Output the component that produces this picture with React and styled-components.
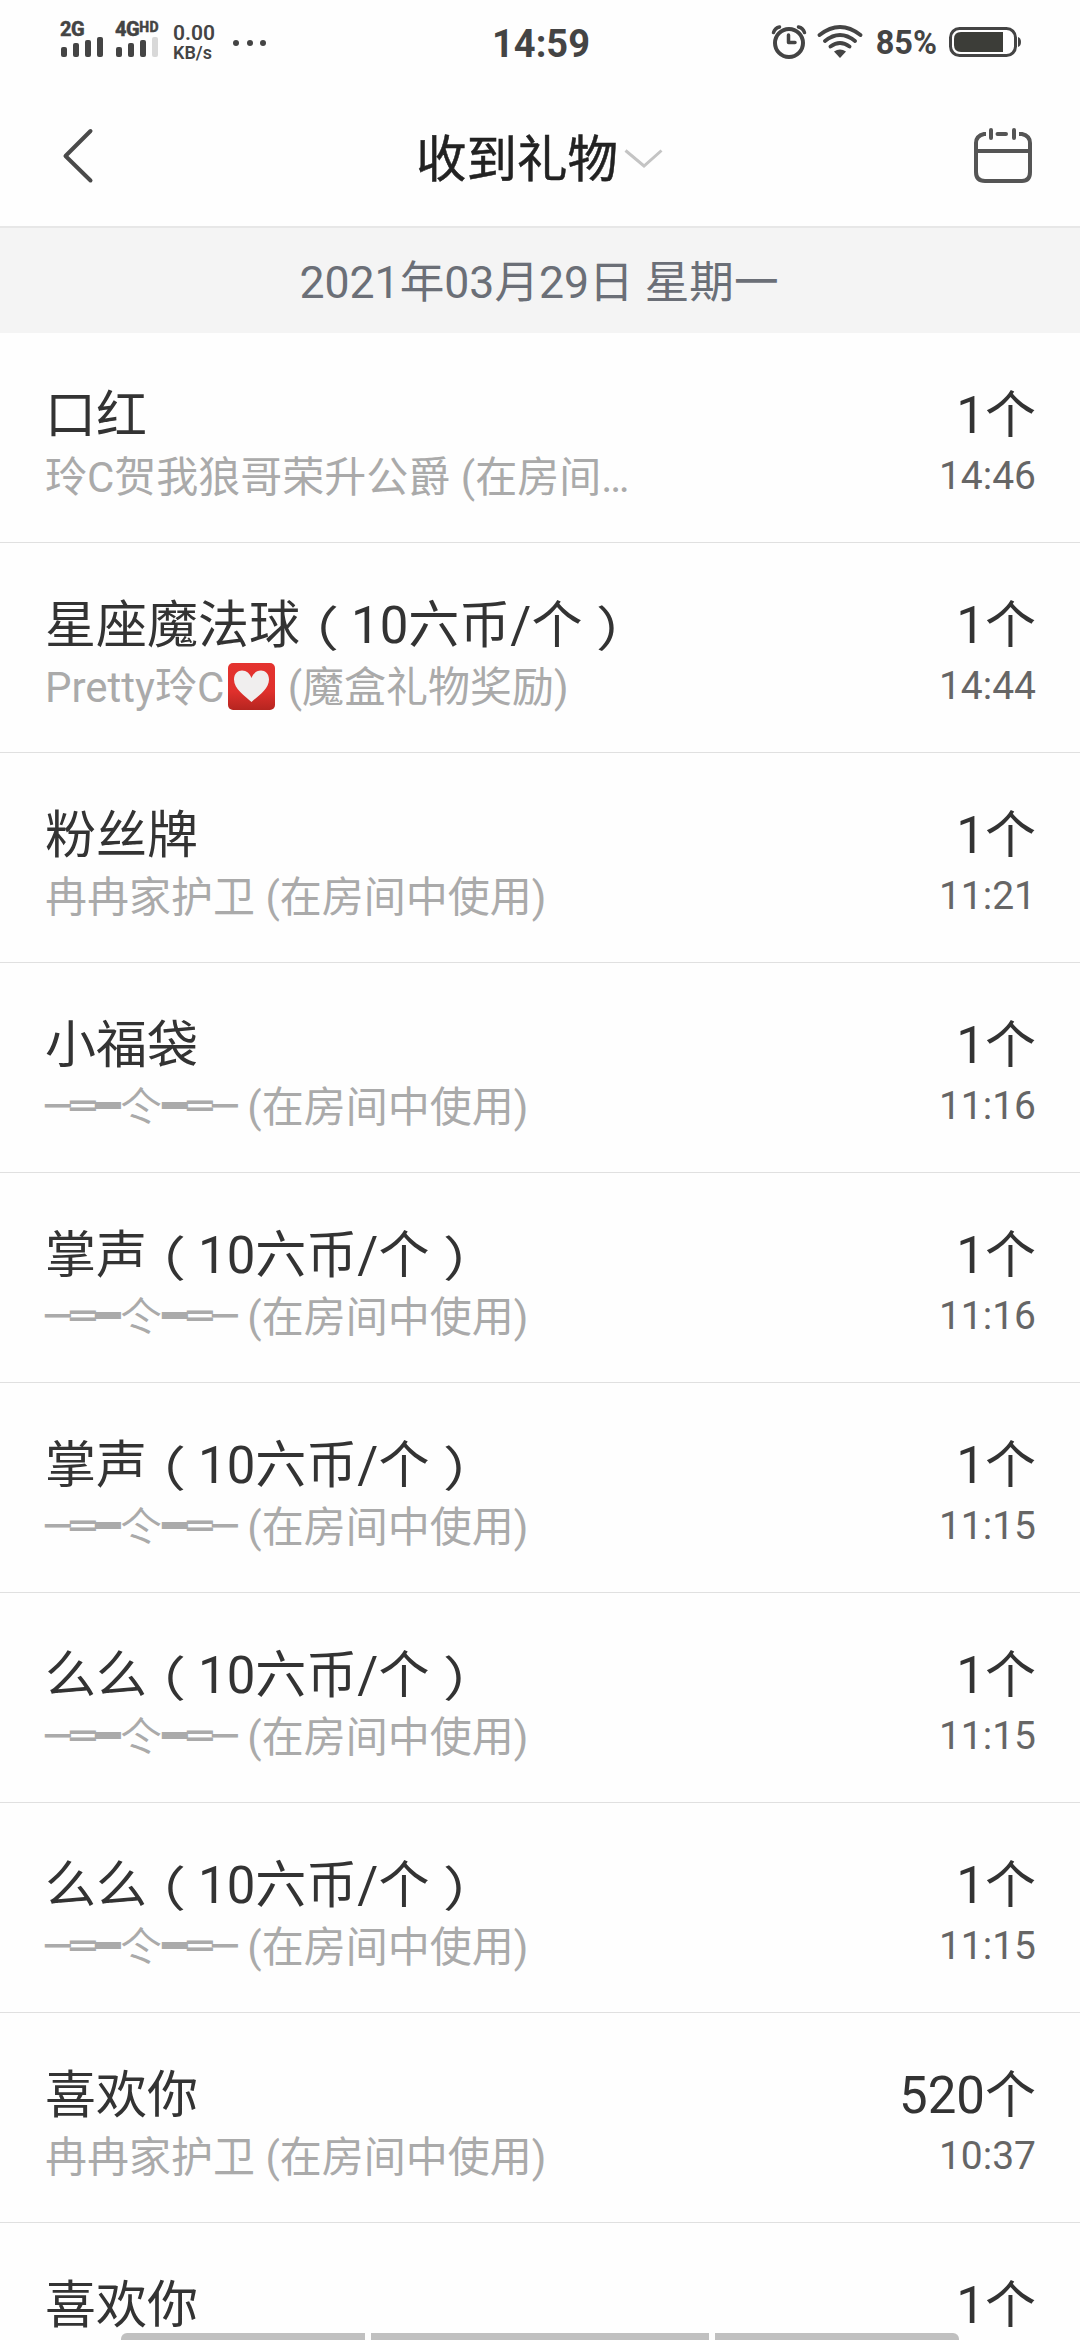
import styled, { createGlobalStyle } from "styled-components";

const GlobalStyle = createGlobalStyle`
    *{
    box-sizing:border-box;
    }
    body{
    margin:0;
    background:#fefefe;
    font-family:Roboto, "Noto Sans CJK SC", sans-serif;
    color:#333;
    }
`;

const Screen = styled.div`
    position:relative;
    width:1080px;
    height:2340px;
    overflow:hidden;
    display:flex;
    flex-direction:column;
`;

const StatusBar = styled.div`
    flex:none;
    height:84px;
    padding:0 58px 0 60px;
    display:grid;
    grid-template-columns:1fr auto 1fr;
    color:#444;
`;

const StatusGroup = styled.div`
    display:flex;
    align-items:flex-start;
    justify-content:${props => props.$end ? "flex-end" : "flex-start"};
`;

const Signal = styled.div`
    width:${props => props.$width}px;
    padding-top:21px;
`;

const Network = styled.div`
    height:16px;
    display:flex;
    align-items:flex-start;
    font-size:20px;
    line-height:17px;
    font-weight:800;
    letter-spacing:-0.5px;
    -webkit-text-stroke:0.4px #444;
    sup{
    font-size:14px;
    line-height:13px;
    letter-spacing:0.5px;
    }
`;

const Bars = styled.div`
    display:flex;
    align-items:flex-end;
    gap:6px;
    height:20px;
    padding-left:1px;
`;

const Bar = styled.span`
    width:6px;
    height:${props => props.$height}px;
    border-radius:2px;
    background:${props => props.$off ? "#d8d8d8" : "#444"};
`;

const Speed = styled.div`
    width:60px;
    padding-top:23px;
    font-size:18px;
    line-height:19px;
    font-weight:600;
    span{
    display:block;
    font-size:21px;
    line-height:20px;
    }
    white-space:nowrap;
`;

const Dots = styled.div`
    display:flex;
    gap:7.5px;
    padding-top:40px;
    i{
    width:6px;
    height:6px;
    border-radius:50%;
    background:#444;
    }
`;

const Clock = styled.div`
    padding-top:22px;
    font-size:38px;
    line-height:44px;
    font-weight:700;
`;

const Percent = styled.div`
    padding-top:21px;
    margin:0 12px 0 13px;
    font-size:32.5px;
    line-height:44px;
    font-weight:700;
`;

const StatusIcon = styled.svg`
    flex:none;
    display:block;
    margin:${props => props.$margin};
`;

const Header = styled.header`
    flex:none;
    height:144px;
    padding:0 45px;
    display:grid;
    grid-template-columns:1fr auto 1fr;
    align-items:start;
    border-bottom:2px solid #e7e7e7;
`;

const IconButton = styled.button`
    border:none;
    background:none;
    padding:${props => props.$padding};
    justify-self:${props => props.$right ? "end" : "start"};
    svg{
    display:block;
    }
`;

const HeaderTitle = styled.h1`
    margin:0;
    padding-top:39px;
    display:flex;
    font-size:50.5px;
    line-height:74px;
    font-weight:400;
    -webkit-text-stroke:0.5px #222;
    color:#222;
    svg{
    margin:25px 0 0 6px;
    }
`;

const DateBar = styled.div`
    flex:none;
    height:105px;
    padding-right:2px;
    background:#f4f4f4;
    color:#6b6f77;
    text-align:center;
    font-size:44.6px;
    line-height:110px;
`;

const GiftRow = styled.div`
    flex:none;
    height:210px;
    padding:52px 44px 0 45px;
    display:flex;
    justify-content:space-between;
    border-bottom:1px solid #e0e0e0;
`;

const GiftInfo = styled.div`
    text-align:${props => props.$right ? "right" : "left"};
    white-space:nowrap;
`;

const GiftName = styled.div`
    font-size:51px;
    line-height:61px;
`;

const Sender = styled.div`
    padding-top:1px;
    font-size:42px;
    line-height:62px;
    color:#aaa;
    display:flex;
`;

const Time = styled.div`
    padding-top:1px;
    font-size:39px;
    line-height:59px;
    color:#666;
`;

const Paren = styled.span`
    display:inline-block;
    width:51px;
    text-align:center;
    font-family:"Noto Sans CJK SC", sans-serif;
    font-feature-settings:"halt";
    line-height:1;
    transform:translate(${props => props.$shift}px, 4px) scale(1.15, 0.94);
`;

const Lines = styled.span`
    margin-top:-2px;
    font-family:"DejaVu Sans Mono", monospace;
    letter-spacing:-0.3px;
`;

const HeartSvg = styled.svg`
    margin:6px 2px 0 4px;
`;

const NavBar = styled.div`
    position:absolute;
    left:121px;
    bottom:0;
    width:838px;
    height:7px;
    display:grid;
    grid-template-columns:244px 338px 244px;
    gap:6px;
    border-radius:6px 6px 0 0;
    overflow:hidden;
    background:#fefefe;
    span{
    background:#c0c0c0;
    }
`;

function Heart(){
    return(
        <HeartSvg width="47" height="47" viewBox="0 0 47 47">
            <defs>
                <linearGradient id="tile" x1="0" y1="0" x2="0" y2="1">
                    <stop offset="0" stopColor="#e4332f" />
                    <stop offset="0.6" stopColor="#e0302c" />
                    <stop offset="1" stopColor="#b52520" />
                </linearGradient>
            </defs>
            <rect width="47" height="47" rx="5" fill="url(#tile)" />
            <path d="M23.500 39C17 33 6 26 6 16.500C6 10.500 10 7.500 14 7.500C18.500 7.500 22 10.500 23.500 15C25 10.500 28.500 7.500 33 7.500C37 7.500 41 10.500 41 16.500C41 26 30 33 23.500 39Z" fill="#f0eeee" />
        </HeartSvg>
    )
}

function Knight(){
    return(
        <>
        <Lines>─═━</Lines>仒<Lines>━═─</Lines>
        </>
    )
}

const inRoom = "\u00a0(在房间中使用)";

const gifts = [
    {name:"口红", sender:"玲C贺我狼哥荣升公爵 (在房间…", count:1, time:"14:46"},
    {name:"星座魔法球", price:true, sender:<>Pretty玲C<Heart />{"\u00a0(魔盒礼物奖励)"}</>, count:1, time:"14:44"},
    {name:"粉丝牌", sender:"冉冉家护卫 (在房间中使用)", count:1, time:"11:21"},
    {name:"小福袋", sender:<><Knight />{inRoom}</>, count:1, time:"11:16"},
    {name:"掌声", price:true, sender:<><Knight />{inRoom}</>, count:1, time:"11:16"},
    {name:"掌声", price:true, sender:<><Knight />{inRoom}</>, count:1, time:"11:15"},
    {name:"么么", price:true, sender:<><Knight />{inRoom}</>, count:1, time:"11:15"},
    {name:"么么", price:true, sender:<><Knight />{inRoom}</>, count:1, time:"11:15"},
    {name:"喜欢你", sender:"冉冉家护卫 (在房间中使用)", count:520, time:"10:37"},
    {name:"喜欢你", count:1},
];

function Gift({name,price,sender,count,time}){
    return(
        <GiftRow>
            <GiftInfo>
                <GiftName>
                    {name}
                    {price && <><Paren $shift={-1}>（</Paren>10六币/个<Paren $shift={3}>）</Paren></>}
                </GiftName>
                {sender && <Sender>{sender}</Sender>}
            </GiftInfo>
            <GiftInfo $right>
                <GiftName>{count}个</GiftName>
                {time && <Time>{time}</Time>}
            </GiftInfo>
        </GiftRow>
    )
}

export default function App(){
    return(
        <Screen>
        <GlobalStyle />
        <StatusBar>
            <StatusGroup>
                <Signal $width={55}>
                    <Network>2G</Network>
                    <Bars><Bar $height={10} /><Bar $height={14} /><Bar $height={17} /><Bar $height={20} /></Bars>
                </Signal>
                <Signal $width={58}>
                    <Network>4G<sup>HD</sup></Network>
                    <Bars><Bar $height={10} /><Bar $height={14} /><Bar $height={17} /><Bar $height={20} $off /></Bars>
                </Signal>
                <Speed><span>0.00</span>KB/s</Speed>
                <Dots><i /><i /><i /></Dots>
            </StatusGroup>
            <Clock>14:59</Clock>
            <StatusGroup $end>
                <StatusIcon $margin="24px 10px 0 0" width="36" height="36" viewBox="0 0 36 36" fill="none" stroke="#444">
                    <circle cx="18" cy="19" r="14" strokeWidth="4" />
                    <path d="M17.500 11V18.500H24" strokeWidth="3.500" strokeLinecap="round" strokeLinejoin="round" />
                    <path d="M2.500 8.500Q4 4 8.500 3M33.500 8.500Q32 4 27.500 3" strokeWidth="3.500" strokeLinecap="round" />
                </StatusIcon>
                <StatusIcon $margin="24px 0 0" width="46" height="36" viewBox="0 0 46 36" fill="none" stroke="#444" strokeWidth="3.800" strokeLinecap="round">
                    <path d="M2.500 11Q23 -5 43.500 11M8 17Q23 5 38 17M13.500 22.500Q23 15.500 32.500 22.500" />
                    <path d="M17 27.500Q23 23.500 29 27.500L23 34Z" fill="#444" stroke="none" />
                </StatusIcon>
                <Percent>85%</Percent>
                <StatusIcon $margin="27px 0 0" width="73" height="30" viewBox="0 0 73 30">
                    <rect x="1.500" y="1.500" width="65" height="27" rx="9" fill="none" stroke="#444" strokeWidth="3" />
                    <path d="M12 5H54V25H12Q5 25 5 18V12Q5 5 12 5Z" fill="#3c3d38" />
                    <path d="M69 10Q72 11 72 15Q72 19 69 20Z" fill="#444" />
                </StatusIcon>
            </StatusGroup>
        </StatusBar>
        <Header>
            <IconButton $padding="43px 0 0 15px">
                <svg width="36" height="58" viewBox="0 0 36 58" fill="none" stroke="#4a4a4a" strokeWidth="4" strokeLinecap="round" strokeLinejoin="round">
                    <path d="M30.500 4L5.500 29L30.500 53.500" />
                </svg>
            </IconButton>
            <HeaderTitle>
                收到礼物
                <svg width="40" height="24" viewBox="0 0 40 24" fill="none" stroke="#c4c4c4" strokeWidth="3">
                    <path d="M1.500 2.500L20 18L37.500 2.500" />
                </svg>
            </HeaderTitle>
            <IconButton $padding="42px 0 0" $right>
                <svg width="62" height="60" viewBox="0 0 62 60" fill="none" stroke="#555" strokeWidth="4">
                    <path d="M13 8H11Q3 10 3 17V46Q3 55 12 55H49Q57 55 57 46V17Q57 10 49 8H46M3 25H57" />
                    <path d="M18 4V12M24.500 8H33M41 4V12" strokeLinecap="round" />
                </svg>
            </IconButton>
        </Header>
        <DateBar>2021年03月29日 星期一</DateBar>
        {gifts.map((gift,index) => <Gift key={index} {...gift} />)}
        <NavBar><span /><span /><span /></NavBar>
        </Screen>
    )
}
